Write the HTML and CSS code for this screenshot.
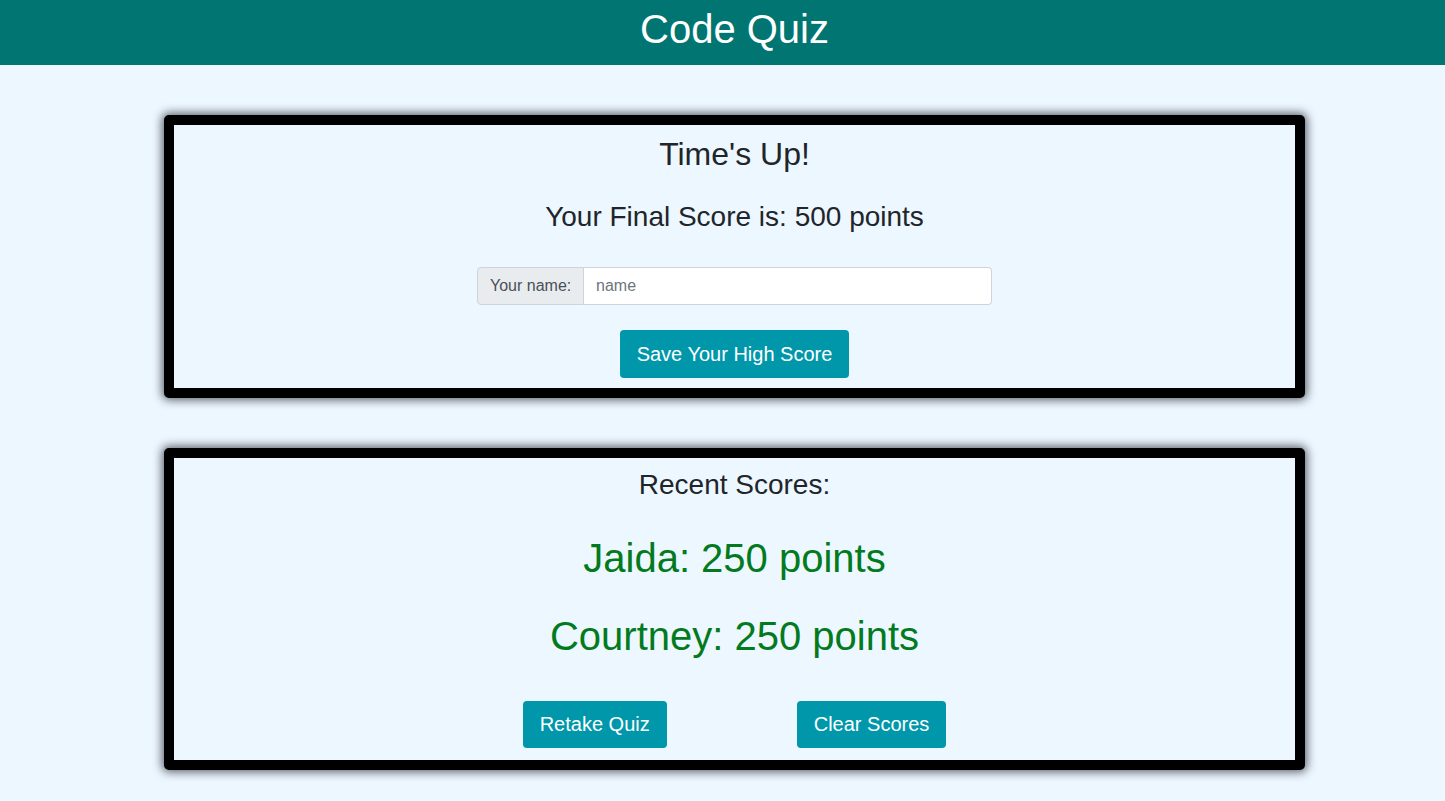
FILE: index.html
```html
<!DOCTYPE html>
<html lang="en">
<head>
<meta charset="utf-8">
<title>Code Quiz</title>
<link rel="stylesheet" href="styles.css">
</head>
<body>
<header class="topbar">
  <h1 class="brand">Code Quiz</h1>
</header>
<main class="page">
  <section class="card">
    <h2 class="card-title">Time's Up!</h2>
    <h4 class="final-score">Your Final Score is: 500 points</h4>
    <form class="name-form">
      <div class="input-group">
        <label class="input-label" for="name">Your name:</label>
        <input class="input-field" id="name" type="text" placeholder="name">
      </div>
      <button type="button" class="btn">Save Your High Score</button>
    </form>
  </section>
  <section class="card">
    <h3 class="card-subtitle">Recent Scores:</h3>
    <ul class="score-list">
      <li class="score">Jaida: 250 points</li>
      <li class="score">Courtney: 250 points</li>
    </ul>
    <div class="actions">
      <button type="button" class="btn">Retake Quiz</button>
      <button type="button" class="btn">Clear Scores</button>
    </div>
  </section>
</main>
</body>
</html>
```
FILE: styles.css
```css
* { box-sizing: border-box; }
html, body { margin: 0; padding: 0; }
body {
  background: #edf7ff;
  font-family: "Liberation Sans", Arial, sans-serif;
  color: #212529;
  min-height: 801px;
}
.topbar {
  background: #007571;
  height: 65px;
  display: flex;
  align-items: center;
  justify-content: center;
  padding-left: 24px;
}
.brand {
  margin: 0;
  color: #ffffff;
  font-size: 40px;
  font-weight: 400;
  line-height: 1.2;
  padding-bottom: 8px;
}
.page {
  padding-left: 24px;
  margin-top: 50px;
  display: flex;
  flex-direction: column;
  align-items: center;
  gap: 50px;
}
.card {
  width: 1141px;
  border: 10px solid #000;
  border-radius: 5px;
  box-shadow: 0 0 10px 2px rgba(40, 45, 55, 0.75);
  background: #edf7ff;
  display: flex;
  flex-direction: column;
  align-items: center;
  padding: 10px 0 10px;
}
.card-title {
  margin: 0;
  font-size: 32px;
  font-weight: 400;
  line-height: 1.2;
}
.final-score {
  margin: 27px 0 0;
  font-size: 28px;
  font-weight: 400;
  line-height: 1.2;
}
.name-form {
  display: flex;
  flex-direction: column;
  align-items: center;
  margin-top: 33px;
  gap: 25px;
}
.input-group {
  display: flex;
  width: 515px;
  height: 38px;
}
.input-label {
  display: flex;
  align-items: center;
  padding: 0 12px;
  width: 107px;
  font-size: 16px;
  color: #495057;
  background: #e9ecef;
  border: 1px solid #ced4da;
  border-radius: 4px 0 0 4px;
  white-space: nowrap;
}
.input-field {
  flex: 1;
  border: 1px solid #ced4da;
  border-left: none;
  border-radius: 0 4px 4px 0;
  padding: 0 12px;
  font-family: "Liberation Sans", Arial, sans-serif;
  font-size: 16px;
  color: #495057;
  background: #fff;
}
.input-field::placeholder { color: #6c757d; }
.btn {
  background: #0097ab;
  color: #fff;
  border: none;
  border-radius: 4px;
  font-family: "Liberation Sans", Arial, sans-serif;
  font-size: 20px;
  line-height: 1.2;
  height: 48px;
  padding: 0 17px;
  cursor: pointer;
}
.card-subtitle {
  margin: 0;
  font-size: 28px;
  font-weight: 400;
  line-height: 1.2;
}
.score-list {
  list-style: none;
  margin: 32px 0 0;
  padding: 0;
  display: flex;
  flex-direction: column;
  align-items: center;
  gap: 30px;
}
.score {
  color: #037a1e;
  font-size: 40px;
  line-height: 1.2;
}
.actions {
  margin-top: 41px;
  display: flex;
  gap: 130px;
}
.card:last-child { padding-bottom: 12px; }
.actions .btn { height: 47px; }
```
